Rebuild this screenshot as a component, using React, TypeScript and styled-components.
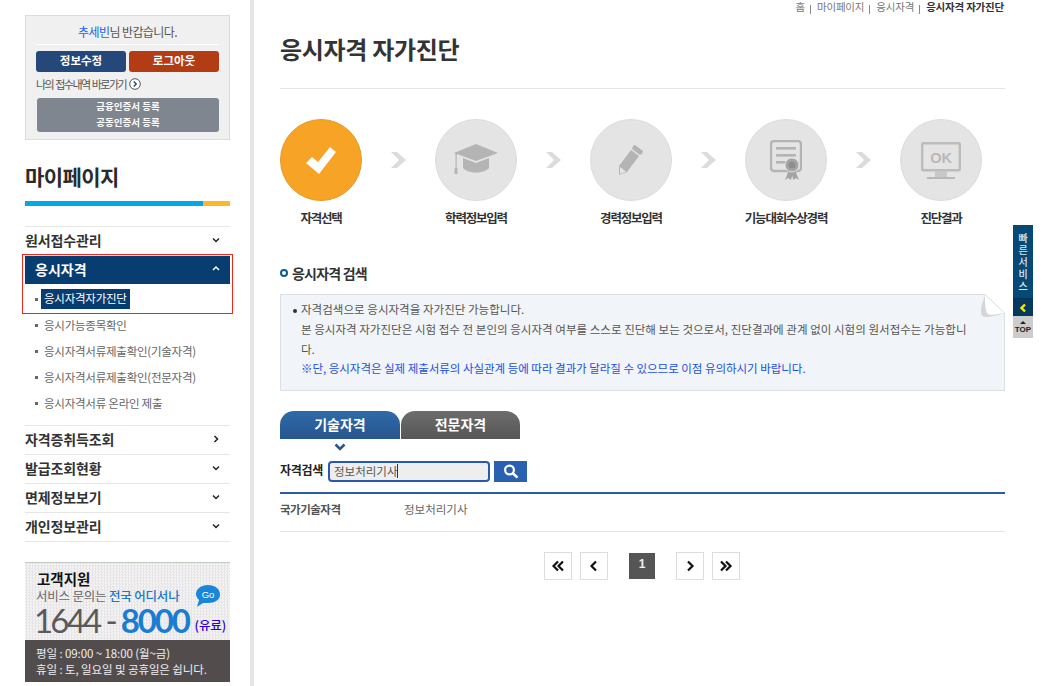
import {FC, Fragment, ReactNode} from "react";
import styled, {createGlobalStyle} from "styled-components";

const GlobalStyle = createGlobalStyle`
  html, body {
    margin: 0;
    padding: 0;
    background: #fff;
  }
  body {
    font-family: "Noto Sans CJK KR", "Liberation Sans", sans-serif;
    color: #333;
  }
  * {
    box-sizing: border-box;
  }
`;

const Page = styled.div`
  position: relative;
  display: flex;
  width: 1054px;
  height: 686px;
  overflow: hidden;
`;

const Sidebar = styled.aside`
  flex: none;
  width: 254px;
  height: 686px;
  padding: 15px 20px 0 25px;
  border-right: 4px solid #e6e6e6;
`;

const LoginBox = styled.div`
  display: flex;
  flex-direction: column;
  height: 125px;
  padding: 0 10px;
  background: #f0f0f0;
  border: 1px solid #dcdcdc;
`;

const Greeting = styled.p`
  margin: 0;
  height: 29px;
  border-bottom: 1px solid #fff;
  font-size: 12px;
  line-height: 32px;
  letter-spacing: -0.6px;
  text-align: center;
  color: #555;
  b {
    font-weight: 400;
    color: #2060f0;
  }
`;

const LoginButtons = styled.div`
  display: flex;
  gap: 3px;
  margin-top: 6px;
`;

const LoginButton = styled.button<{$bg: string}>`
  width: 90px;
  height: 21px;
  padding: 0 0 3px;
  border: 0;
  border-radius: 3px;
  background: ${(p) => p.$bg};
  font: 700 11.5px/16px "Noto Sans CJK KR", sans-serif;
  color: #fff;
`;

const MyLink = styled.div`
  display: flex;
  align-items: center;
  gap: 3px;
  height: 13px;
  margin-top: 5px;
  font-size: 11px;
  letter-spacing: -1.5px;
  word-spacing: 1px;
  color: #555;
  white-space: nowrap;
`;

const CertButton = styled.div`
  display: flex;
  flex-direction: column;
  align-items: center;
  width: 182px;
  height: 34px;
  margin: 8px 0 0 1px;
  border-radius: 3px;
  background: #80868f;
  font-size: 9.5px;
  font-weight: 700;
  line-height: 16px;
  color: #fff;
`;

const SideTitle = styled.h2`
  margin: 22px 0 0;
  height: 29px;
  font-size: 21px;
  font-weight: 700;
  line-height: 29px;
  letter-spacing: -0.6px;
  color: #2a2a2a;
`;

const TitleBar = styled.div`
  display: flex;
  height: 5px;
  margin-top: 10px;
  background: #fcb72a;
  &::before {
    content: "";
    width: 178px;
    background: #00a8e4;
  }
`;

const Menu = styled.nav`
  margin-top: 20px;
  border-top: 1px solid #e6e6e6;
`;

const MenuItem = styled.div`
  display: flex;
  align-items: center;
  justify-content: space-between;
  height: 29px;
  padding: 0 9px 3px 0;
  border-bottom: 1px solid #e6e6e6;
  font-size: 14px;
  font-weight: 700;
  letter-spacing: -0.15px;
  color: #333;
`;

const ActiveGroup = styled.div`
  height: 60px;
  margin: -2px -3px 0;
  padding: 1px 2px 0;
  border: 1px solid #f0281e;
`;

const ActiveHead = styled.div`
  display: flex;
  align-items: center;
  justify-content: space-between;
  height: 28px;
  padding: 0 9px 3px 10px;
  background: #073d70;
  font-size: 14px;
  font-weight: 700;
  color: #fff;
`;

const SubList = styled.ul<{$last?: boolean}>`
  margin: ${(p) => (p.$last ? "-1px 0 0" : "0")};
  padding: ${(p) => (p.$last ? "0 0 8px" : "3px 0 0")};
  list-style: none;
  border-bottom: ${(p) => (p.$last ? "1px solid #e6e6e6" : "0")};
`;

const SubItem = styled.li`
  display: flex;
  align-items: center;
  height: 26px;
  padding: 0 0 2px 10px;
  font-size: 11.5px;
  letter-spacing: -0.25px;
  color: #666;
  white-space: nowrap;
  &::before {
    content: "";
    width: 3px;
    height: 3px;
    margin-right: 6px;
    background: #666;
  }
`;

const CurrentSub = styled.span`
  height: 20px;
  margin-left: -3px;
  padding: 0 3px;
  background: #073d70;
  line-height: 19px;
  color: #fff;
`;

const Banner = styled.div`
  display: flex;
  flex-direction: column;
  height: 120px;
  margin-top: 20px;
  border-top: 1px solid #c4c8c4;
  background: repeating-conic-gradient(#e7e4ec 0 25%, #f4f5ef 0 50%) 0 0 / 3px 3px;
`;

const BannerTop = styled.div`
  position: relative;
  flex: none;
  height: 77px;
  padding: 7px 0 0 11px;
`;

const BannerTitle = styled.div`
  padding-left: 1px;
  font-size: 14.5px;
  font-weight: 700;
  line-height: 17px;
  color: #111;
`;

const BannerSub = styled.div`
  font-size: 12.5px;
  line-height: 17px;
  letter-spacing: -0.2px;
  color: #666;
  b {
    font-weight: 500;
    color: #1a78c8;
  }
`;

const Phone = styled.div`
  display: flex;
  align-items: baseline;
  margin: 0 0 0 -2px;
  font-family: "Lato", "Liberation Sans", sans-serif;
  font-size: 33px;
  line-height: 33px;
  letter-spacing: -2.8px;
  color: #5a5a5a;
  white-space: nowrap;
`;

const PhoneBlue = styled.span`
  margin-left: 6px;
  font-weight: 700;
  letter-spacing: -2.2px;
  color: #1a7dd2;
`;

const PhoneDash = styled.span`
  margin-left: 6px;
`;

const Paid = styled.span`
  position: relative;
  top: -3px;
  margin-left: 6px;
  font-family: "Noto Sans CJK KR", sans-serif;
  font-size: 12.5px;
  font-weight: 500;
  letter-spacing: -0.1px;
  color: #3000d8;
`;

const GoBadge = styled.div`
  position: absolute;
  top: 22px;
  left: 171px;
`;

const BannerBottom = styled.div`
  flex: 1;
  padding: 5px 0 0 11px;
  background: #524c4c;
  font-size: 11.5px;
  line-height: 16px;
  letter-spacing: -0.1px;
  color: #eee;
  white-space: nowrap;
`;

const Main = styled.main`
  flex: none;
  width: 751px;
  padding: 0 0 0 26px;
`;

const Crumbs = styled.div`
  display: flex;
  justify-content: flex-end;
  gap: 12px;
  height: 14px;
  padding-right: 1px;
  font-size: 10.5px;
  line-height: 13px;
  letter-spacing: -0.2px;
  color: #777;
`;

const Crumb = styled.span<{$current?: boolean}>`
  position: relative;
  font-weight: ${(p) => (p.$current ? 700 : 400)};
  color: ${(p) => (p.$current ? "#333" : "#777")};
  &:not(:first-child)::before {
    content: "";
    position: absolute;
    left: -7px;
    top: 5px;
    width: 1px;
    height: 9px;
    background: #888;
  }
`;

const PageTitle = styled.h1`
  margin: 0;
  height: 75px;
  padding-top: 15px;
  border-bottom: 1px solid #e4e4e4;
  font-size: 24px;
  font-weight: 700;
  line-height: 40px;
  letter-spacing: -0.3px;
  color: #333;
`;

const Steps = styled.ol`
  display: flex;
  margin: 30px 0 0;
  padding: 0;
  list-style: none;
`;

const Step = styled.li`
  display: flex;
  flex-direction: column;
  align-items: center;
  width: 82px;
`;

const Circle = styled.div<{$on?: boolean}>`
  display: flex;
  align-items: center;
  justify-content: center;
  width: 82px;
  height: 82px;
  border-radius: 50%;
  background: ${(p) => (p.$on ? "#f6a326" : "#e4e4e4")};
  border: 1px solid ${(p) => (p.$on ? "#e59a2a" : "#dcdcdc")};
`;

const StepLabel = styled.div`
  margin-top: 8px;
  font-size: 12.5px;
  font-weight: 700;
  line-height: 18px;
  letter-spacing: -1.2px;
  color: #333;
  white-space: nowrap;
`;

const StepArrow = styled.div`
  display: flex;
  align-items: center;
  justify-content: center;
  width: 73px;
  height: 82px;
`;

const SectionHead = styled.h3`
  display: flex;
  align-items: center;
  gap: 4px;
  margin: 36px 0 0;
  height: 20px;
  font-size: 14px;
  font-weight: 700;
  letter-spacing: -0.8px;
  color: #333;
  &::before {
    content: "";
    width: 4px;
    height: 4px;
    border: 2px solid #0b5a94;
    border-radius: 50%;
  }
`;

const Notice = styled.div`
  position: relative;
  height: 97px;
  margin-top: 11px;
  padding: 5px 30px 0 20px;
  background: #f1f4f8;
  border: 1px solid #dcdfe3;
  font-size: 11.5px;
  line-height: 19.8px;
  letter-spacing: 0.03px;
  color: #555;
  p {
    margin: 0;
  }
`;

const NoticeFirst = styled.p`
  position: relative;
  &::before {
    content: "";
    position: absolute;
    left: -8px;
    top: 9px;
    width: 4px;
    height: 4px;
    border-radius: 50%;
    background: #333;
  }
`;

const NoticeBlue = styled.p`
  letter-spacing: -0.03px;
  color: #1a50e0;
`;

const Fold = styled.svg`
  position: absolute;
  top: -1px;
  right: -1px;
`;

const Tabs = styled.div`
  display: flex;
  gap: 1px;
  margin-top: 20px;
`;

const Tab = styled.div<{$on?: boolean}>`
  width: ${(p) => (p.$on ? "120px" : "119px")};
  height: 28px;
  border-radius: 14px 14px 0 0;
  background: ${(p) =>
    p.$on ? "linear-gradient(#2e6aa9, #27568c)" : "linear-gradient(#6d6d6d, #565656)"};
  font-size: 14px;
  font-weight: 700;
  line-height: 26px;
  text-align: center;
  color: #fff;
`;

const TabPointer = styled.div`
  display: flex;
  height: 22px;
  padding: 4px 0 0 54px;
`;

const SearchRow = styled.div`
  display: flex;
  align-items: center;
  height: 21px;
`;

const SearchLabel = styled.label`
  width: 48px;
  padding-bottom: 5px;
  font-size: 12px;
  font-weight: 700;
  letter-spacing: -0.3px;
  color: #222;
`;

const SearchField = styled.div`
  display: flex;
  align-items: center;
  width: 162px;
  height: 21px;
  padding: 0 0 1px 4px;
  border: 2px solid #2a58b0;
  border-radius: 4px;
  background: #eee;
  font-size: 11.5px;
  color: #555;
`;

const Caret = styled.i`
  width: 1px;
  height: 14px;
  background: #333;
`;

const SearchButton = styled.button`
  display: flex;
  align-items: center;
  justify-content: center;
  width: 33px;
  height: 21px;
  margin-left: 4px;
  padding: 0;
  border: 0;
  background: #2a60b0;
`;

const ResultRow = styled.div`
  display: flex;
  align-items: center;
  height: 40px;
  margin-top: 10px;
  padding-bottom: 7px;
  border-top: 2px solid #2a5ca5;
  border-bottom: 1px solid #e2e2e2;
  font-size: 11.5px;
  color: #666;
`;

const ResultType = styled.span`
  width: 124px;
  font-weight: 700;
  letter-spacing: -0.5px;
  color: #555;
`;

const Pager = styled.div`
  display: flex;
  align-items: center;
  justify-content: center;
  margin-top: 20px;
  padding-right: 1px;
`;

const PageBox = styled.div<{$gap?: number}>`
  display: flex;
  align-items: center;
  justify-content: center;
  width: 28px;
  height: 28px;
  margin-left: ${(p) => p.$gap ?? 0}px;
  border: 1px solid #ddd;
`;

const PageCurrent = styled.div`
  width: 26px;
  height: 26px;
  margin-left: 21px;
  background: #555;
  font: 700 12px/22px "Liberation Sans", sans-serif;
  text-align: center;
  color: #eee;
`;

const Quick = styled.div`
  position: absolute;
  top: 225px;
  left: 1013px;
  width: 20px;
`;

const QuickTitle = styled.div`
  display: flex;
  flex-direction: column;
  align-items: center;
  height: 73px;
  padding-top: 7px;
  background: #054a77;
  font-size: 10px;
  font-weight: 500;
  line-height: 12px;
  color: #dfe8ef;
`;

const QuickToggle = styled.div`
  display: flex;
  align-items: center;
  justify-content: center;
  height: 18px;
  border-top: 1px solid #04304f;
  background: #053a5e;
`;

const QuickTop = styled.div`
  display: flex;
  flex-direction: column;
  align-items: center;
  height: 22px;
  padding-top: 5px;
  background: #ccc;
  font: 700 8px/9px "Liberation Sans", sans-serif;
  color: #222;
  &::before {
    content: "";
    border: 3px solid transparent;
    border-top: 0;
    border-bottom: 3px solid #222;
    margin-bottom: 1px;
  }
`;

const Chevron: FC<{dir: "up" | "down" | "right"; color?: string}> = ({dir, color = "#222"}) => {
  const points = {
    up: "2,6 5,3 8,6",
    down: "2,3.5 5,6.5 8,3.5",
    right: "3.5,2 6.5,5 3.5,8",
  }[dir];
  return (
    <svg width="10" height="10" viewBox="0 0 10 10">
      <polyline points={points} fill="none" stroke={color} strokeWidth="1.5" />
    </svg>
  );
};

const PageIcon: FC<{points: string[]}> = ({points}) => (
  <svg width="14" height="12" viewBox="0 0 14 12">
    {points.map((p) => (
      <polyline key={p} points={p} fill="none" stroke="#111" strokeWidth="2.2" />
    ))}
  </svg>
);

const StepChevron = () => (
  <svg width="15" height="16" viewBox="0 0 15 16">
    <polygon points="0,0 6,0 15,8 6,16 0,16 8,8" fill="#dcdcdc" />
  </svg>
);

const CheckIcon = () => (
  <svg width="30" height="27" viewBox="0 0 30 27">
    <polygon points="0,16 6,10 12,15 24,0 30,5 13,27" fill="#fff" />
  </svg>
);

const CapIcon = () => (
  <svg width="44" height="32" viewBox="0 0 44 32">
    <polygon points="22,0 44,9 22,17 3,10 3,11 0,9" fill="#b4b4b4" />
    <path d="M9 14 L22 19 L35 14 V24 C30 30 14 30 9 24 Z" fill="#b4b4b4" />
    <rect x="1.5" y="10" width="1.2" height="16" fill="#b4b4b4" />
    <rect x="0.5" y="24" width="3" height="6" fill="#b4b4b4" />
  </svg>
);

const PencilIcon = () => (
  <svg width="26" height="32" viewBox="0 0 26 32">
    <path d="M17 1 L25 7 L24 10 L22 11 L14 5 L15 2 Z" fill="#b4b4b4" />
    <path d="M13 6 L21 12 L9 28 L1 31 L1 22 Z" fill="#b4b4b4" />
    <path d="M2 23 L8 27.5 L2 30 Z" fill="#e4e4e4" />
  </svg>
);

const CertIcon = () => (
  <svg width="32" height="41" viewBox="0 0 32 41">
    <rect x="1" y="1" width="30" height="30" rx="3" fill="none" stroke="#b4b4b4" strokeWidth="2.4" />
    <rect x="6" y="7" width="20" height="2.6" fill="#b4b4b4" />
    <rect x="6" y="14" width="20" height="2.6" fill="#b4b4b4" />
    <rect x="6" y="21" width="11" height="2.6" fill="#b4b4b4" />
    <polygon points="19,30 15,40 18,38 21,40 23,32" fill="#a4a4a4" />
    <polygon points="25,30 29,40 26,38 23.5,40 21,32" fill="#a4a4a4" />
    <circle cx="22" cy="25" r="7" fill="#a4a4a4" stroke="#e4e4e4" />
    <circle cx="22" cy="25" r="3.5" fill="#8e8e8e" />
  </svg>
);

const MonitorIcon = () => (
  <svg width="40" height="37" viewBox="0 0 40 37">
    <rect x="1.2" y="1.2" width="37.6" height="27" rx="1" fill="none" stroke="#bcbcbc" strokeWidth="2.4" />
    <text x="20" y="21" textAnchor="middle" fontFamily="Liberation Sans" fontWeight="700" fontSize="14.5" fill="#b8b8b8">
      OK
    </text>
    <rect x="14" y="29" width="12" height="6" fill="#c8c8c8" />
    <rect x="6" y="35" width="28" height="2" fill="#b8b8b8" />
  </svg>
);

const steps: {label: string; icon: ReactNode; on?: boolean}[] = [
  {label: "자격선택", icon: <CheckIcon />, on: true},
  {label: "학력정보입력", icon: <CapIcon />},
  {label: "경력정보입력", icon: <PencilIcon />},
  {label: "기능대회수상경력", icon: <CertIcon />},
  {label: "진단결과", icon: <MonitorIcon />},
];

const closedMenus = ["발급조회현황", "면제정보보기", "개인정보관리"];

const App: FC = () => (
  <Page>
    <GlobalStyle />
    <Sidebar>
      <LoginBox>
        <Greeting>
          <b>추세빈</b>님 반갑습니다.
        </Greeting>
        <LoginButtons>
          <LoginButton $bg="#26477a">정보수정</LoginButton>
          <LoginButton $bg="#b43c14">로그아웃</LoginButton>
        </LoginButtons>
        <MyLink>
          나의 접수내역 바로가기
          <svg width="12" height="12" viewBox="0 0 12 12">
            <circle cx="6" cy="6" r="5.3" fill="#fff" stroke="#555" />
            <polyline points="4.8,3.5 7.2,6 4.8,8.5" fill="none" stroke="#26477a" strokeWidth="1.4" />
          </svg>
        </MyLink>
        <CertButton>
          <span>금융인증서 등록</span>
          <span>공동인증서 등록</span>
        </CertButton>
      </LoginBox>

      <SideTitle>마이페이지</SideTitle>
      <TitleBar />

      <Menu>
        <MenuItem>
          원서접수관리
          <Chevron dir="down" />
        </MenuItem>
        <ActiveGroup>
          <ActiveHead>
            응시자격
            <Chevron dir="up" color="#fff" />
          </ActiveHead>
          <SubList>
            <SubItem>
              <CurrentSub>응시자격자가진단</CurrentSub>
            </SubItem>
          </SubList>
        </ActiveGroup>
        <SubList $last>
          <SubItem>응시가능종목확인</SubItem>
          <SubItem>응시자격서류제출확인(기술자격)</SubItem>
          <SubItem>응시자격서류제출확인(전문자격)</SubItem>
          <SubItem>응시자격서류 온라인 제출</SubItem>
        </SubList>
        <MenuItem>
          자격증취득조회
          <Chevron dir="right" />
        </MenuItem>
        {closedMenus.map((name) => (
          <MenuItem key={name}>
            {name}
            <Chevron dir="down" />
          </MenuItem>
        ))}
      </Menu>

      <Banner>
        <BannerTop>
          <BannerTitle>고객지원</BannerTitle>
          <BannerSub>
            서비스 문의는 <b>전국 어디서나</b>
          </BannerSub>
          <Phone>
            1644
            <PhoneDash>-</PhoneDash>
            <PhoneBlue>8000</PhoneBlue>
            <Paid>(유료)</Paid>
          </Phone>
          <GoBadge>
            <svg width="24" height="23" viewBox="0 0 24 23">
              <path d="M12 0 C19 0 24 4 24 9.5 C24 15 19 18 12 18 L7 18 L1 22 L3 15 C1 13 0 11 0 9 C0 4 5 0 12 0 Z" fill="#1a86d8" />
              <text x="12" y="13" textAnchor="middle" fontFamily="Liberation Sans" fontSize="9.5" fill="#fff">
                Go
              </text>
            </svg>
          </GoBadge>
        </BannerTop>
        <BannerBottom>
          평일 : 09:00 ~ 18:00 (월~금)
          <br />
          휴일 : 토, 일요일 및 공휴일은 쉽니다.
        </BannerBottom>
      </Banner>
    </Sidebar>

    <Main>
      <Crumbs>
        <Crumb>홈</Crumb>
        <Crumb>마이페이지</Crumb>
        <Crumb>응시자격</Crumb>
        <Crumb $current>응시자격 자가진단</Crumb>
      </Crumbs>
      <PageTitle>응시자격 자가진단</PageTitle>

      <Steps>
        {steps.map((step, i) => (
          <Fragment key={step.label}>
            {i > 0 && (
              <StepArrow>
                <StepChevron />
              </StepArrow>
            )}
            <Step>
              <Circle $on={step.on}>{step.icon}</Circle>
              <StepLabel>{step.label}</StepLabel>
            </Step>
          </Fragment>
        ))}
      </Steps>

      <SectionHead>응시자격 검색</SectionHead>
      <Notice>
        <NoticeFirst>자격검색으로 응시자격을 자가진단 가능합니다.</NoticeFirst>
        <p>
          본 응시자격 자가진단은 시험 접수 전 본인의 응시자격 여부를 스스로 진단해 보는 것으로서, 진단결과에 관계 없이 시험의 원서접수는 가능합니다.
        </p>
        <NoticeBlue>※단, 응시자격은 실제 제출서류의 사실관계 등에 따라 결과가 달라질 수 있으므로 이점 유의하시기 바랍니다.</NoticeBlue>
        <Fold width="24" height="25" viewBox="0 0 24 25">
          <polygon points="4,0 24,0 24,19" fill="#fff" />
          <path d="M4 1 L23 19 C15 20 8 22 6 20 C4 16 4 8 4 1 Z" fill="#fff" />
          <line x1="4" y1="0.5" x2="23.5" y2="19" stroke="#dcdfe3" />
          <path d="M4 1 C2 8 0 12 0 17 C0 21 2 23 4 23 C10 23 18 21 23 19 C16 20 10 22 7 20 C4 18 4 8 4 1 Z" fill="#d4d6d8" />
        </Fold>
      </Notice>

      <Tabs>
        <Tab $on>기술자격</Tab>
        <Tab>전문자격</Tab>
      </Tabs>
      <TabPointer>
        <svg width="12" height="8" viewBox="0 0 12 8">
          <polyline points="1.5,1.5 6,6 10.5,1.5" fill="none" stroke="#27568c" strokeWidth="2.6" />
        </svg>
      </TabPointer>
      <SearchRow>
        <SearchLabel>자격검색</SearchLabel>
        <SearchField>
          정보처리기사
          <Caret />
        </SearchField>
        <SearchButton aria-label="검색">
          <svg width="16" height="15" viewBox="0 0 16 15">
            <circle cx="6.5" cy="6" r="4.4" fill="none" stroke="#fff" strokeWidth="2.2" />
            <line x1="9.8" y1="9.3" x2="14.5" y2="13.6" stroke="#fff" strokeWidth="2.6" />
          </svg>
        </SearchButton>
      </SearchRow>
      <ResultRow>
        <ResultType>국가기술자격</ResultType>
        정보처리기사
      </ResultRow>

      <Pager>
        <PageBox>
          <PageIcon points={["7,1.5 2.5,6 7,10.5", "12,1.5 7.5,6 12,10.5"]} />
        </PageBox>
        <PageBox $gap={8}>
          <PageIcon points={["9,1.5 4.5,6 9,10.5"]} />
        </PageBox>
        <PageCurrent>1</PageCurrent>
        <PageBox $gap={21}>
          <PageIcon points={["5,1.5 9.5,6 5,10.5"]} />
        </PageBox>
        <PageBox $gap={8}>
          <PageIcon points={["2,1.5 6.5,6 2,10.5", "7,1.5 11.5,6 7,10.5"]} />
        </PageBox>
      </Pager>
    </Main>

    <Quick>
      <QuickTitle>
        <span>빠</span>
        <span>른</span>
        <span>서</span>
        <span>비</span>
        <span>스</span>
      </QuickTitle>
      <QuickToggle>
        <svg width="8" height="10" viewBox="0 0 8 10">
          <polyline points="6,1.5 2.5,5 6,8.5" fill="none" stroke="#ffe800" strokeWidth="2.4" />
        </svg>
      </QuickToggle>
      <QuickTop>TOP</QuickTop>
    </Quick>
  </Page>
);

export default App;
